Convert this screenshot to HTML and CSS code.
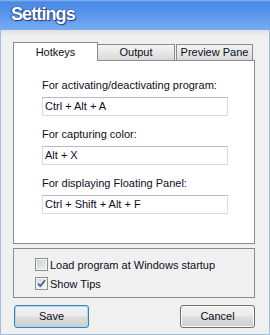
FILE: index.html
```html
<!DOCTYPE html>
<html>
<head>
<meta charset="utf-8">
<link rel="stylesheet" href="styles.css">
</head>
<body>
<div class="window">
  <div class="titlebar"><span class="title">Settings</span></div>
  <div class="content">
    <div class="tabs">
      <div class="tab active">Hotkeys</div>
      <div class="tab output">Output</div>
      <div class="tab preview">Preview Pane</div>
    </div>
    <div class="panel">
      <div class="label">For activating/deactivating program:</div>
      <div class="input">Ctrl + Alt + A</div>
      <div class="label">For capturing color:</div>
      <div class="input">Alt + X</div>
      <div class="label">For displaying Floating Panel:</div>
      <div class="input">Ctrl + Shift + Alt + F</div>
    </div>
    <div class="group">
      <div class="check-row">
        <span class="checkbox"></span>
        <span>Load program at Windows startup</span>
      </div>
      <div class="check-row">
        <span class="checkbox checked"><svg width="9" height="9" viewBox="0 0 9 9"><path d="M1 4.5 L3.3 7 L8 1.2" fill="none" stroke="#4a5f9a" stroke-width="1.8"/></svg></span>
        <span>Show Tips</span>
      </div>
    </div>
    <div class="buttons">
      <div class="button default">Save</div>
      <div class="button">Cancel</div>
    </div>
  </div>
</div>
</body>
</html>
```
FILE: styles.css
```css
* { box-sizing: border-box; }
html, body { margin: 0; padding: 0; background: #f0f0f0; }
body {
  font-family: "Liberation Sans", Arial, sans-serif;
  font-size: 11px;
  color: #0e0e22;
}
.window {
  width: 270px;
  height: 335px;
  border-left: 1px solid #a3bbdd;
  border-right: 1px solid #a3bbdd;
  border-bottom: 1px solid #a3bbdd;
  display: flex;
  flex-direction: column;
  background: #f0f0f0;
}
.titlebar {
  height: 30px;
  margin: 0 -1px;
  background: linear-gradient(to bottom, #8db6f2 0, #4c89e5 2px, #5592e8 40%, #78acf2 100%);
  padding-left: 11px;
  line-height: 29px;
}
.title {
  font-weight: bold;
  font-size: 18px;
  letter-spacing: -0.9px;
  color: #fff;
  text-shadow: 0 0 1px #1b3f86, 1px 1px 1px #1b3f86, -1px 0 1px #2a55a0;
}
.content {
  flex: 1;
  padding: 12px 14px 0 12px;
  background: linear-gradient(to bottom, #dedede 0, #ececec 4px, #f0f0f0 8px);
  display: flex;
  flex-direction: column;
}
.tabs {
  display: flex;
  align-items: flex-end;
  height: 18px;
}
.tab {
  height: 16px;
  border: 1px solid #898c95;
  border-bottom: none;
  background: linear-gradient(to bottom, #f4f4f4, #e4e4e4 60%, #d9d9d9);
  text-align: center;
  line-height: 15px;
  font-size: 11px;
}
.tab.active {
  position: relative;
  z-index: 1;
  width: 85px;
  height: 19px;
  margin-bottom: -1px;
  background: #fff;
  line-height: 19px;
}
.tab.output {
  width: 77px;
  border-left: none;
}
.tab.preview {
  width: 77px;
  margin-left: 1px;
}
.panel {
  height: 184px;
  border: 1px solid #898c95;
  background: #fff;
  padding: 18px 0 0 28px;
  display: flex;
  flex-direction: column;
}
.label {
  height: 13px;
  line-height: 13px;
  margin-bottom: 5px;
}
.input {
  width: 186px;
  height: 19px;
  border: 1px solid #dadcdf;
  border-top-color: #b9bbc0;
  padding-left: 2px;
  line-height: 17px;
  margin-bottom: 12px;
  background: #fff;
}
.group {
  margin-top: 4px;
  height: 50px;
  border: 1px solid #898c95;
  padding: 6px 0 0 21px;
  display: flex;
  flex-direction: column;
}
.check-row {
  height: 19px;
  display: flex;
  align-items: center;
}
.checkbox {
  width: 13px;
  height: 13px;
  border: 1px solid #8e8f8f;
  background: linear-gradient(135deg, #c6cad1, #f4f4f5);
  box-shadow: inset 0 0 0 1px #f4f4f4;
  margin-right: 2px;
  display: flex;
  align-items: center;
  justify-content: center;
}
.checkbox.checked {
  background: linear-gradient(135deg, #d6d9de, #f8f8f8);
}
.buttons {
  margin-top: 7px;
  display: flex;
  justify-content: space-between;
  padding-left: 1px;
}
.button {
  width: 75px;
  height: 23px;
  border: 1px solid #707070;
  border-radius: 3px;
  background: linear-gradient(to bottom, #f2f2f2 0, #ebebeb 48%, #dddddd 52%, #cfcfcf 100%);
  box-shadow: inset 0 0 0 1px #fbfbfb;
  text-align: center;
  line-height: 21px;
  font-size: 11px;
}
.button.default {
  border-color: #3c7fb1;
  box-shadow: inset 0 0 0 1px #a6dcf5;
}
```
